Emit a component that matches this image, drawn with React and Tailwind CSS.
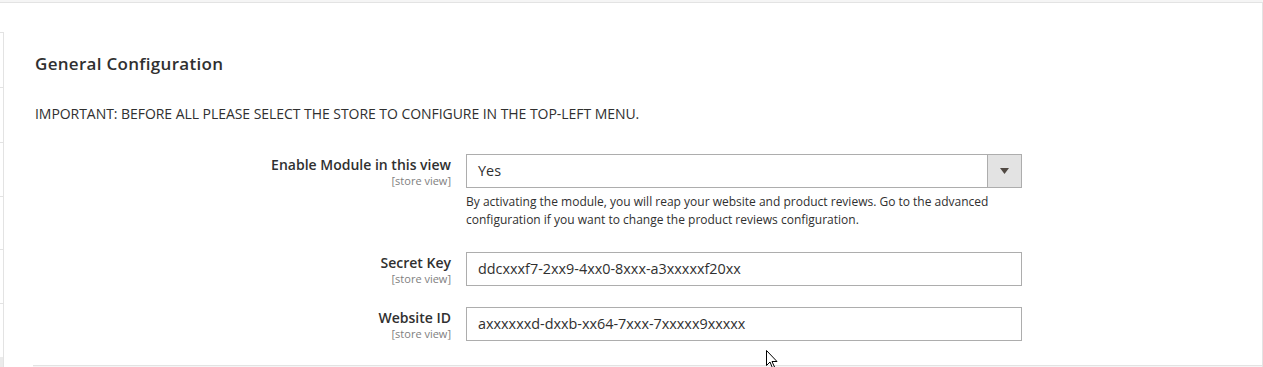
import React from 'react';

const font = { fontFamily: '"Open Sans", "Liberation Sans", sans-serif' };

const Label = ({ title }) => (
  <div className="w-[416px] shrink-0 text-right pt-[2px]">
    <div className="text-[14px] leading-[18px] font-semibold text-[#303030]">{title}</div>
    <div className="text-[11px] leading-[14px] text-[#808080]">[store view]</div>
  </div>
);

const TextField = ({ value }) => (
  <div className="w-[556px] h-[34px] border border-[#adadad] bg-white flex items-center px-[11px] text-[14.4px] text-[#303030]">
    {value}
  </div>
);

export default function App() {
  return (
    <div style={font} className="w-[1263px] h-[367px] bg-white overflow-hidden relative">
      <div className="h-[3px] bg-[#f5f5f5] border-b border-[#e3e3e3]" />
      <div className="flex h-[364px]">
        {/* left tabs strip, mostly cut off */}
        <div className="w-[4px] shrink-0 flex flex-col">
          <div className="h-[29px]" />
          <div className="flex-1 border-r border-t border-[#e3e3e3] flex flex-col">
            <div className="h-[55px] border-b border-[#e3e3e3]" />
            <div className="h-[55px] border-b border-[#e3e3e3]" />
            <div className="h-[54px] border-b border-[#e3e3e3]" />
            <div className="h-[53px] border-b border-[#e3e3e3]" />
            <div className="h-[54px] border-b border-[#e3e3e3]" />
            <div className="h-[53px]" />
            <div className="flex-1 bg-[#ebebeb]" />
          </div>
        </div>

        <div className="flex-1 border-r border-[#e3e3e3] flex flex-col">
          <div className="flex-1 pl-[31px] pt-[50px]">
            <h2 className="text-[17px] leading-[22px] font-semibold text-[#303030] tracking-[0.3px]">
              General Configuration
            </h2>
            <p className="mt-[29px] text-[14px] leading-[20px] text-[#303030] tracking-[-0.05px]">
              IMPORTANT: BEFORE ALL PLEASE SELECT THE STORE TO CONFIGURE IN THE TOP-LEFT MENU.
            </p>

            <div className="mt-[30px] flex gap-[15px]">
              <Label title="Enable Module in this view" />
              <div className="w-[556px]">
                <div className="h-[34px] border border-[#adadad] bg-white flex">
                  <div className="flex-1 flex items-center px-[11px] text-[14.4px] text-[#303030]">Yes</div>
                  <div className="w-[34px] border-l border-[#adadad] bg-[#e3e3e3] flex items-center justify-center">
                    <svg width="9" height="6" viewBox="0 0 9 6">
                      <path d="M0 0h9L4.5 6z" fill="#514943" />
                    </svg>
                  </div>
                </div>
                <p className="mt-[5px] text-[12px] leading-[18px] text-[#303030]">
                  By activating the module, you will reap your website and product reviews. Go to the advanced
                  <br />
                  configuration if you want to change the product reviews configuration.
                </p>
              </div>
            </div>

            <div className="mt-[23px] flex gap-[15px]">
              <Label title="Secret Key" />
              <TextField value="ddcxxxf7-2xx9-4xx0-8xxx-a3xxxxxf20xx" />
            </div>

            <div className="mt-[21px] flex gap-[15px]">
              <Label title="Website ID" />
              <TextField value="axxxxxxd-dxxb-xx64-7xxx-7xxxxx9xxxxx" />
            </div>
          </div>
          <div className="h-[2px] border-t border-[#e3e3e3] bg-[#f5f5f5] ml-[29px]" />
        </div>
      </div>

      {/* mouse pointer */}
      <svg className="absolute left-[766px] top-[350px]" width="13" height="19" viewBox="0 0 13 19">
        <path d="M0.5 0.5v15l3.5-3.5 2.5 6 2-1-2.5-5.5h5z" fill="#fff" stroke="#000" strokeWidth="1" />
      </svg>
    </div>
  );
}
